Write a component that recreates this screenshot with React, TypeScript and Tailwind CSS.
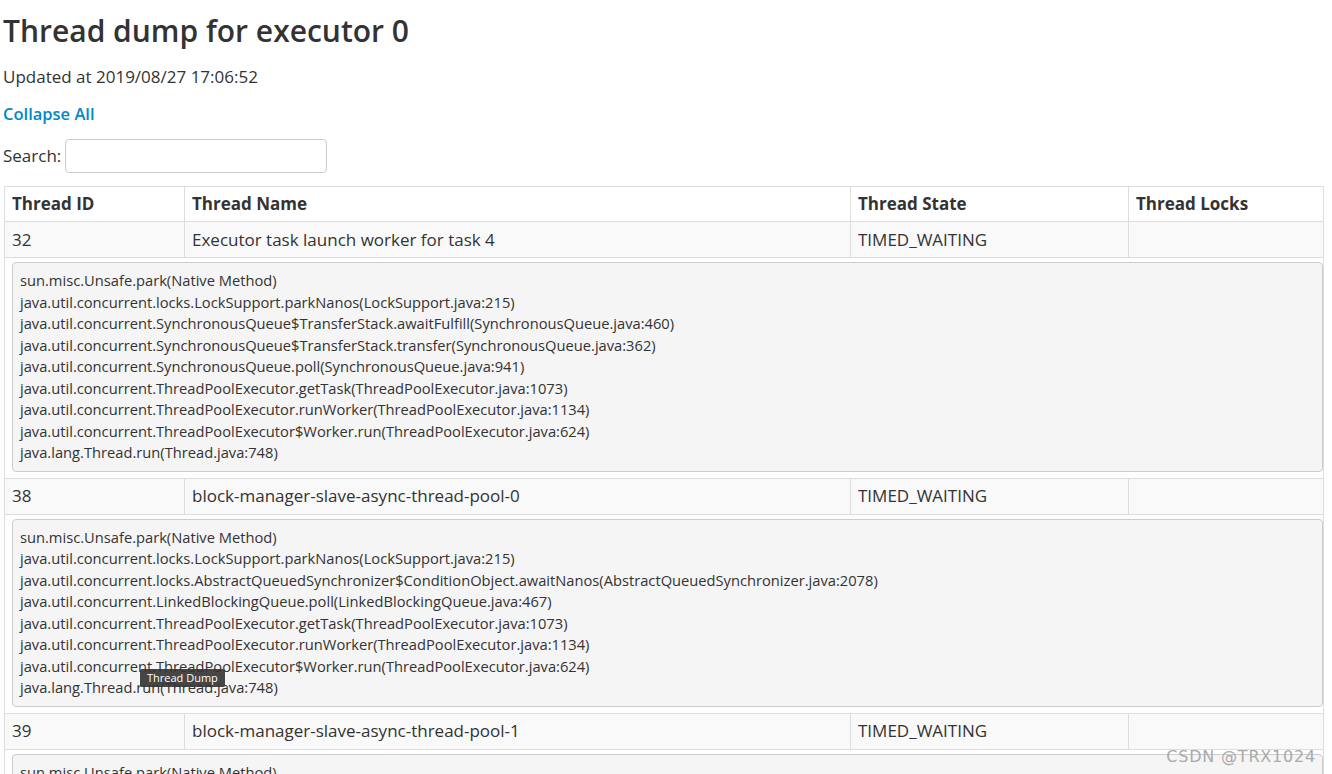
import React from 'react';

const threads = [
  {
    id: '32',
    name: 'Executor task launch worker for task 4',
    state: 'TIMED_WAITING',
    stack: [
      'sun.misc.Unsafe.park(Native Method)',
      'java.util.concurrent.locks.LockSupport.parkNanos(LockSupport.java:215)',
      'java.util.concurrent.SynchronousQueue$TransferStack.awaitFulfill(SynchronousQueue.java:460)',
      'java.util.concurrent.SynchronousQueue$TransferStack.transfer(SynchronousQueue.java:362)',
      'java.util.concurrent.SynchronousQueue.poll(SynchronousQueue.java:941)',
      'java.util.concurrent.ThreadPoolExecutor.getTask(ThreadPoolExecutor.java:1073)',
      'java.util.concurrent.ThreadPoolExecutor.runWorker(ThreadPoolExecutor.java:1134)',
      'java.util.concurrent.ThreadPoolExecutor$Worker.run(ThreadPoolExecutor.java:624)',
      'java.lang.Thread.run(Thread.java:748)',
    ],
  },
  {
    id: '38',
    name: 'block-manager-slave-async-thread-pool-0',
    state: 'TIMED_WAITING',
    stack: [
      'sun.misc.Unsafe.park(Native Method)',
      'java.util.concurrent.locks.LockSupport.parkNanos(LockSupport.java:215)',
      'java.util.concurrent.locks.AbstractQueuedSynchronizer$ConditionObject.awaitNanos(AbstractQueuedSynchronizer.java:2078)',
      'java.util.concurrent.LinkedBlockingQueue.poll(LinkedBlockingQueue.java:467)',
      'java.util.concurrent.ThreadPoolExecutor.getTask(ThreadPoolExecutor.java:1073)',
      'java.util.concurrent.ThreadPoolExecutor.runWorker(ThreadPoolExecutor.java:1134)',
      'java.util.concurrent.ThreadPoolExecutor$Worker.run(ThreadPoolExecutor.java:624)',
      'java.lang.Thread.run(Thread.java:748)',
    ],
    tooltip: true,
  },
  {
    id: '39',
    name: 'block-manager-slave-async-thread-pool-1',
    state: 'TIMED_WAITING',
    stack: [
      'sun.misc.Unsafe.park(Native Method)',
      'java.util.concurrent.locks.LockSupport.parkNanos(LockSupport.java:215)',
      'java.util.concurrent.locks.AbstractQueuedSynchronizer$ConditionObject.awaitNanos(AbstractQueuedSynchronizer.java:2078)',
      'java.util.concurrent.LinkedBlockingQueue.poll(LinkedBlockingQueue.java:467)',
    ],
  },
];

const App = () => {
  return (
    <div className="relative h-[774px] overflow-hidden bg-white font-['Open_Sans',sans-serif] text-[#333]">
      <div className="pl-[3px]">
        <h3 className="pt-[10px] text-[30px] leading-[42px] font-semibold">Thread dump for executor 0</h3>
        <div className="mt-[14px] text-[17px] leading-[22px]">Updated at 2019/08/27 17:06:52</div>
        <div className="mt-[15px] text-[16.5px] leading-[22px] font-semibold text-[#0088cc]">Collapse All</div>
        <div className="mt-[14px] flex items-center gap-[4px] text-[17px]">
          <span>Search:</span>
          <input className="h-[34px] w-[262px] rounded-[4px] border border-[#ccc] bg-white" />
        </div>
      </div>

      <table className="mt-[13px] ml-[4px] w-[1320px] table-fixed border-collapse border border-[#ddd] text-[17px]">
        <colgroup>
          <col className="w-[180px]" />
          <col className="w-[666px]" />
          <col className="w-[278px]" />
          <col />
        </colgroup>
        <thead>
          <tr className="h-[35px]">
            <th className="border border-[#ddd] px-[7px] text-left font-bold">Thread ID</th>
            <th className="border border-[#ddd] px-[7px] text-left font-bold">Thread Name</th>
            <th className="border border-[#ddd] px-[7px] text-left font-bold">Thread State</th>
            <th className="border border-[#ddd] px-[7px] text-left font-bold">Thread Locks</th>
          </tr>
        </thead>
        <tbody>
          {threads.map((t) => (
            <React.Fragment key={t.id}>
              <tr className="h-[36px] bg-[#f9f9f9]">
                <td className="border border-[#ddd] px-[7px]">{t.id}</td>
                <td className="border border-[#ddd] px-[7px]">{t.name}</td>
                <td className="border border-[#ddd] px-[7px]">{t.state}</td>
                <td className="border border-[#ddd] px-[7px]"></td>
              </tr>
              <tr>
                <td colSpan={4} className="border border-[#ddd] pt-[4px] pb-[6px] pl-[7px] pr-0">
                  <div className="relative rounded-[4px] border border-[#ccc] bg-[#f5f5f5] px-[7px] py-[7px] text-[14.7px] leading-[21.5px] whitespace-nowrap">
                    {t.stack.map((line, i) => (
                      <div key={i}>{line}</div>
                    ))}
                    {t.tooltip && (
                      <div className="absolute left-[127px] top-[149px] rounded-[2px] bg-[#333]/90 px-[7px] text-[11px] leading-[18px] text-white">
                        Thread Dump
                      </div>
                    )}
                  </div>
                </td>
              </tr>
            </React.Fragment>
          ))}
        </tbody>
      </table>

      <div className="absolute right-[16px] bottom-[8px] font-['DejaVu_Sans',sans-serif] text-[16px] leading-[18px] tracking-[0.8px] text-[#aaa]">
        CSDN @TRX1024
      </div>
    </div>
  );
};

export default App;
